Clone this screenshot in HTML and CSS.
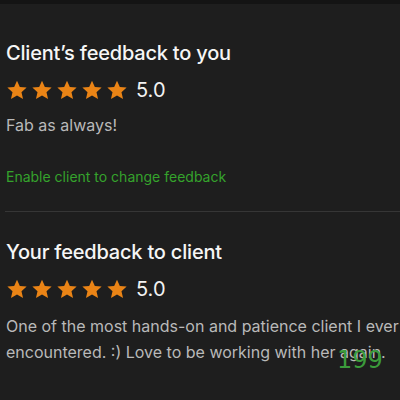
FILE: index.html
```html
<!DOCTYPE html>
<html lang="en">
<head>
    <meta charset="UTF-8">
    <meta name="viewport" content="width=device-width, initial-scale=1.0">
    <title>Feedback</title>
    <link rel="stylesheet" href="styles.css">
</head>
<body>
    <div class="topbar"></div>
    <div class="container">
        <section class="feedback">
            <h2>Client’s feedback to you</h2>
            <div class="rating">
                <span class="stars">
                    <svg viewBox="0 0 24 24"><path d="M12 1.8l3.1 6.9 7.4.7-5.6 5 1.7 7.4L12 18l-6.6 3.8 1.7-7.4-5.6-5 7.4-.7z"/></svg>
                    <svg viewBox="0 0 24 24"><path d="M12 1.8l3.1 6.9 7.4.7-5.6 5 1.7 7.4L12 18l-6.6 3.8 1.7-7.4-5.6-5 7.4-.7z"/></svg>
                    <svg viewBox="0 0 24 24"><path d="M12 1.8l3.1 6.9 7.4.7-5.6 5 1.7 7.4L12 18l-6.6 3.8 1.7-7.4-5.6-5 7.4-.7z"/></svg>
                    <svg viewBox="0 0 24 24"><path d="M12 1.8l3.1 6.9 7.4.7-5.6 5 1.7 7.4L12 18l-6.6 3.8 1.7-7.4-5.6-5 7.4-.7z"/></svg>
                    <svg viewBox="0 0 24 24"><path d="M12 1.8l3.1 6.9 7.4.7-5.6 5 1.7 7.4L12 18l-6.6 3.8 1.7-7.4-5.6-5 7.4-.7z"/></svg>
                </span>
                <span class="score">5.0</span>
            </div>
            <p class="comment">Fab as always!</p>
            <a class="action" href="#">Enable client to change feedback</a>
        </section>

        <hr class="divider">

        <section class="feedback">
            <h2>Your feedback to client</h2>
            <div class="rating">
                <span class="stars">
                    <svg viewBox="0 0 24 24"><path d="M12 1.8l3.1 6.9 7.4.7-5.6 5 1.7 7.4L12 18l-6.6 3.8 1.7-7.4-5.6-5 7.4-.7z"/></svg>
                    <svg viewBox="0 0 24 24"><path d="M12 1.8l3.1 6.9 7.4.7-5.6 5 1.7 7.4L12 18l-6.6 3.8 1.7-7.4-5.6-5 7.4-.7z"/></svg>
                    <svg viewBox="0 0 24 24"><path d="M12 1.8l3.1 6.9 7.4.7-5.6 5 1.7 7.4L12 18l-6.6 3.8 1.7-7.4-5.6-5 7.4-.7z"/></svg>
                    <svg viewBox="0 0 24 24"><path d="M12 1.8l3.1 6.9 7.4.7-5.6 5 1.7 7.4L12 18l-6.6 3.8 1.7-7.4-5.6-5 7.4-.7z"/></svg>
                    <svg viewBox="0 0 24 24"><path d="M12 1.8l3.1 6.9 7.4.7-5.6 5 1.7 7.4L12 18l-6.6 3.8 1.7-7.4-5.6-5 7.4-.7z"/></svg>
                </span>
                <span class="score">5.0</span>
            </div>
            <p class="comment long">One of the most hands-on and patience client I ever encountered. :) Love to be working with her again.</p>
        </section>
    </div>
    <span class="counter">199</span>
</body>
</html>
```

FILE: styles.css
```css
body {
    margin: 0;
    font-family: Inter, "Liberation Sans", sans-serif;
    background-color: #1e1e1e;
    color: #f2f2f2;
    overflow: hidden;
}
.topbar {
    height: 4px;
    background-color: #141414;
}
.container {
    padding: 0 0 0 6px;
    width: 420px;
}
.feedback h2 {
    font-size: 20px;
    font-weight: 500;
    letter-spacing: -0.2px;
    margin: 0;
    color: #f6f6f6;
}
.feedback:first-child h2 {
    padding-top: 37px;
}
.rating {
    display: flex;
    align-items: center;
    margin-top: 13px;
}
.stars {
    display: flex;
    gap: 3px;
}
.stars svg {
    width: 22px;
    height: 22px;
    fill: #ea8416;
}
.score {
    font-size: 20px;
    margin-left: 8px;
}
.comment {
    font-size: 16px;
    color: #b9b9b9;
    margin: 13px 0 0;
}
.comment.long {
    line-height: 26px;
    margin-top: 12px;
}
.action {
    display: block;
    margin-top: 33px;
    font-size: 14px;
    color: #35a32c;
    text-decoration: none;
}
.divider {
    border: none;
    border-top: 1px solid #363636;
    margin: 26px 0 28px -1px;
}
.counter {
    position: absolute;
    left: 337px;
    top: 346px;
    font-family: "DejaVu Sans", sans-serif;
    font-size: 24px;
    color: #3b9b3b;
}
```
